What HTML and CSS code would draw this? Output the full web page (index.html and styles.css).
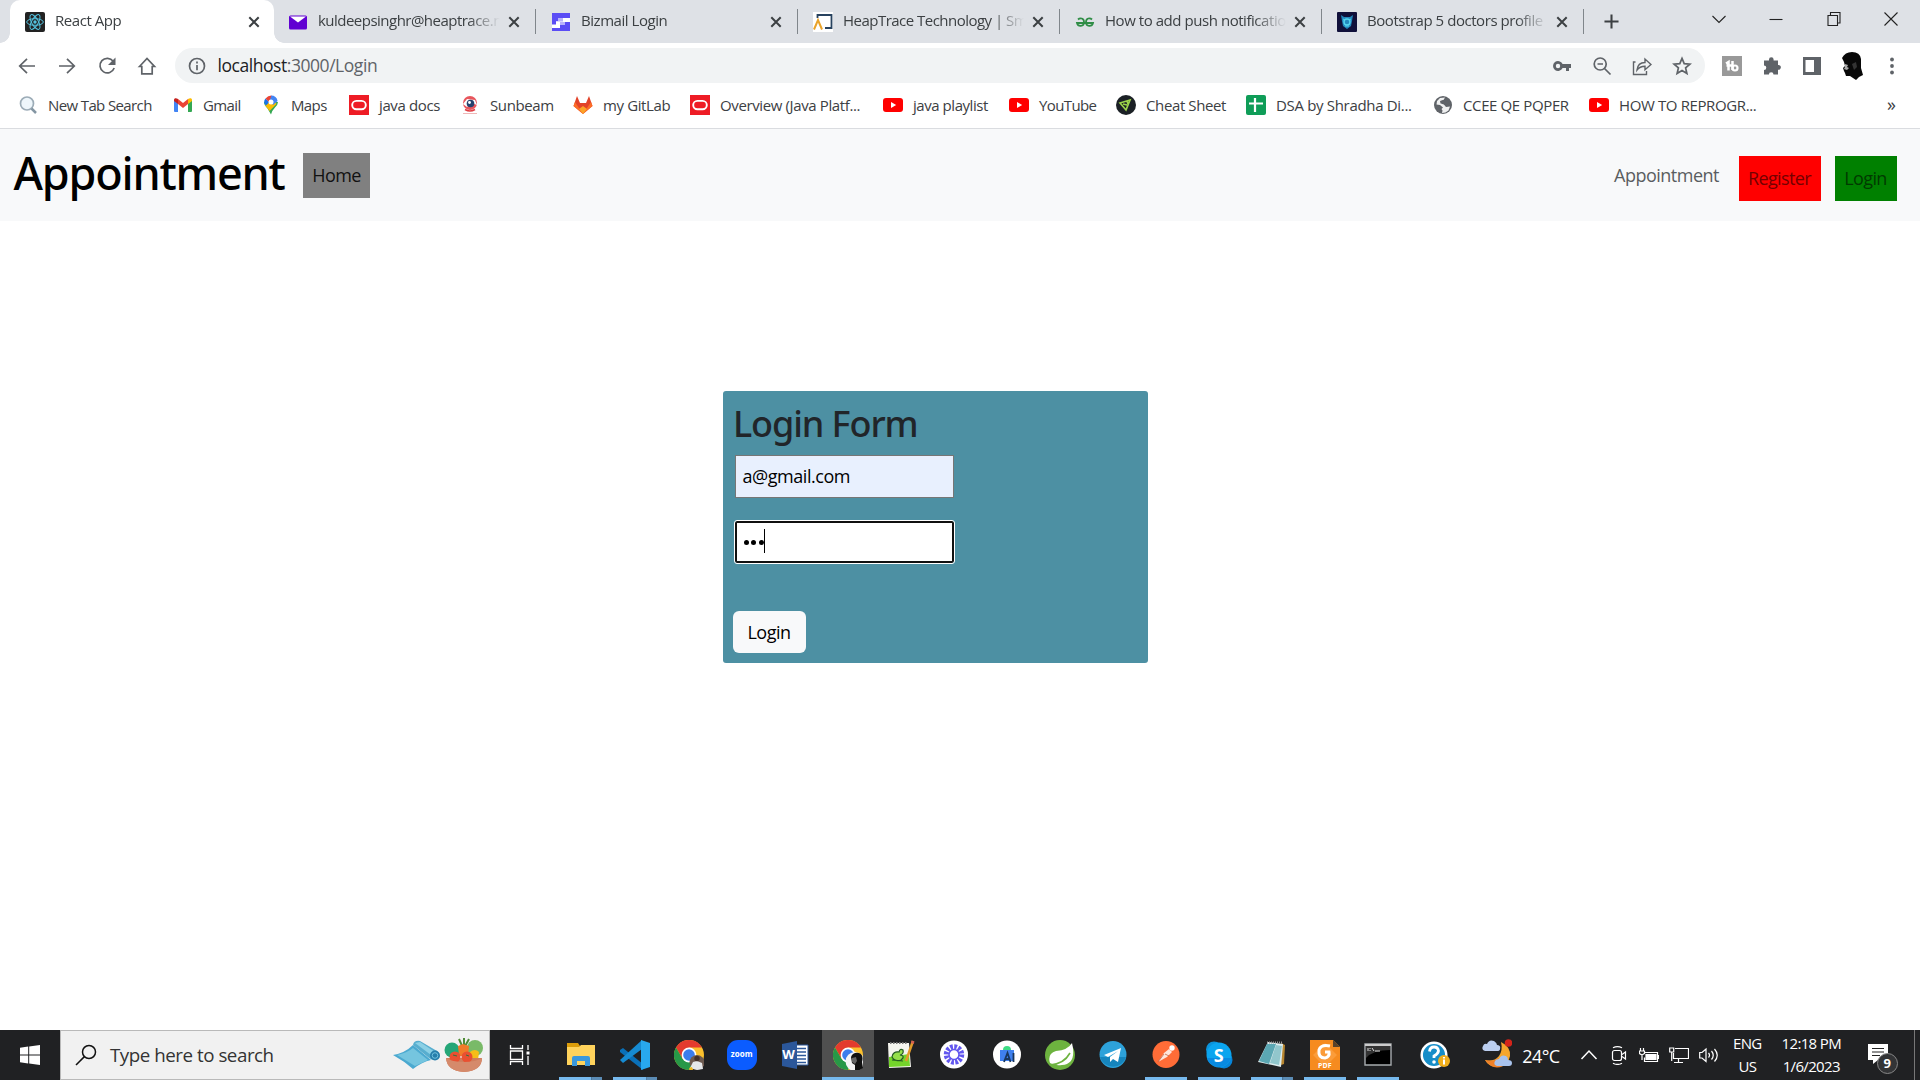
FILE: index.html
```html
<!DOCTYPE html>
<html lang="en">
<head>
<meta charset="utf-8">
<title>React App</title>
<link rel="stylesheet" href="styles.css">
</head>
<body>
<svg class="defs" aria-hidden="true">
  <symbol id="close" viewBox="0 0 12 12"><path d="M1.3 1.3 10.7 10.7M10.7 1.3 1.3 10.7" fill="none" stroke="#3c4043" stroke-width="2"/></symbol>
  <symbol id="oracle" viewBox="0 0 20 20"><path fill="#ee1c25" d="M0 0h20v20H0z"/><rect x="3.2" y="5.9" width="13.6" height="8.4" rx="4.2" fill="none" stroke="#fff" stroke-width="1.9"/></symbol>
  <symbol id="youtube" viewBox="0 0 20 20"><rect y="3" width="20" height="14" rx="3" fill="#f00"/><path fill="#fff" d="m8 7 5.2 3L8 13z"/></symbol>
  <symbol id="chrome" viewBox="0 0 30 30"><circle cx="15" cy="15" r="15" fill="#fbc02d"/><path fill="#e33b2e" d="M2 7.5A15 15 0 0 1 28 7.5H15L8.5 18.7z"/><path fill="#279847" d="M2 7.5A15 15 0 0 0 15 30l6.5-11.2L15 22 8.5 18.7z"/><circle cx="15" cy="15" r="7.4" fill="#fff"/><circle cx="15" cy="15" r="5.8" fill="#3b7ded"/></symbol>
</svg>

<header class="tabstrip">
  <div class="tab tab-active">
    <svg class="favicon" viewBox="0 0 20 20"><rect width="20" height="20" rx="2" fill="#222"/><g fill="none" stroke="#53c1de" stroke-width="1"><ellipse cx="10" cy="10" rx="8.3" ry="3.3"/><ellipse cx="10" cy="10" rx="8.3" ry="3.3" transform="rotate(60 10 10)"/><ellipse cx="10" cy="10" rx="8.3" ry="3.3" transform="rotate(120 10 10)"/></g><circle cx="10" cy="10" r="1.7" fill="#53c1de"/></svg>
    <span class="tab-title">React App</span><svg class="close"><use href="#close"/></svg>
  </div>
  <div class="tab">
    <svg class="favicon" viewBox="0 0 20 20"><rect x="1" y="3.5" width="18" height="14" rx="1.5" fill="#6001d2"/><path fill="#fff" d="M2 4.5h16l-8 6z"/></svg>
    <span class="tab-title">kuldeepsinghr@heaptrace.n</span><svg class="close"><use href="#close"/></svg>
  </div>
  <div class="tab">
    <svg class="favicon" viewBox="0 0 20 20"><path fill="#5b4df5" d="M1 1h18v18H1z"/><path fill="#fff" d="M7 6h12v4h-5v3H9v3H1v-3.5h4V9h2z"/><path fill="#b9b3fb" d="M7 6h5v3.5H5V9h2zM9 13h5v-3h-5z"/></svg>
    <span class="tab-title">Bizmail Login</span><svg class="close"><use href="#close"/></svg>
  </div>
  <div class="tab">
    <svg class="favicon" viewBox="0 0 20 20"><path fill="#fff" d="M0 0h20v20H0z"/><path fill="none" stroke="#27425f" stroke-width="1.8" d="M4.5 6V3h14v13H12"/><path fill="none" stroke="#e9a32b" stroke-width="2" d="M1 17.500 5 8l4 9.500"/></svg>
    <span class="tab-title">HeapTrace Technology | Sm</span><svg class="close"><use href="#close"/></svg>
  </div>
  <div class="tab">
    <svg class="favicon" viewBox="0 0 20 20"><path fill="none" stroke="#2f8d46" stroke-width="1.8" d="M3 7.500C5 5.500 9 6 9 10c0 5-6 5-7 1h16c-1 4-7 4-7-1 0-4 4-4.500 6-2.500"/></svg>
    <span class="tab-title">How to add push notificatio</span><svg class="close"><use href="#close"/></svg>
  </div>
  <div class="tab">
    <svg class="favicon" viewBox="0 0 20 20"><rect width="20" height="20" rx="1" fill="#10103a"/><path fill="#2388bd" d="m4 3 3 2h6l3-2-1 6-1 5-4 3-4-3-1-5z"/><circle cx="10" cy="10" r="3" fill="none" stroke="#54d4ee" stroke-width="1.400"/><path fill="none" stroke="#54d4ee" d="m6 7 2 1m6-1-2 1m-4 6h4"/></svg>
    <span class="tab-title">Bootstrap 5 doctors profile</span><svg class="close"><use href="#close"/></svg>
  </div>
  <svg class="new-tab" viewBox="0 0 16 16"><path d="M8 .5v15M.5 8h15" stroke="#3c4043" stroke-width="2.2"/></svg>
  <div class="window-controls">
    <svg viewBox="0 0 14 14"><path d="m.5 4 6.500 6.500L13.500 4"/></svg>
    <svg viewBox="0 0 14 14"><path d="M.5 7.500h13"/></svg>
    <svg viewBox="0 0 14 14"><path d="M1 3.500h9.500v10H1zM3.500 3.500v-3h9.500v10.500h-2.500"/></svg>
    <svg viewBox="0 0 14 14"><path d="m.5.5 13 13m0-13-13 13"/></svg>
  </div>
</header>

<nav class="toolbar">
  <svg viewBox="0 0 20 20"><path d="M18 10H3m7-7.200L2.700 10l7.300 7.200"/></svg>
  <svg viewBox="0 0 20 20"><path d="M2 10h15m-7-7.200 7.300 7.200-7.300 7.200"/></svg>
  <svg viewBox="0 0 20 20"><path d="M16.200 5.300A7.300 7.300 0 1 0 17.200 12"/><path class="solid" d="M18.500 1.500V9H11z"/></svg>
  <svg viewBox="0 0 20 20"><path d="m2.500 10.500 7.500-8 7.500 8h-2.300v7.300H4.800v-7.300z"/></svg>
  <div class="omnibox">
    <svg viewBox="0 0 20 20"><circle cx="10" cy="10" r="7.500"/><path d="M10 9v5.200M10 5.500v2"/></svg>
    <span class="url"><b>localhost</b>:3000/Login</span>
    <svg viewBox="0 0 20 20"><path class="solid" fill-rule="evenodd" d="M10.600 8A5 5 0 1 0 10.600 12H14v3h3v-3h2V8zM6 7.800a2.200 2.200 0 1 1 0 4.400 2.200 2.200 0 0 1 0-4.400z"/></svg>
    <svg viewBox="0 0 20 20"><circle cx="8.200" cy="8" r="6"/><path d="m12.500 12.500 6 6M5.500 8H11"/></svg>
    <svg viewBox="0 0 20 20"><path stroke-width="1.400" d="M3.500 6H1.500v12.500h13V15M5 14c.5-5 3-7.500 8-7.500V3l6 5.500-6 5.200v-3.500c-4 0-6 1-8 3.800z"/></svg>
    <svg viewBox="0 0 20 20"><path d="m10 2.400 2.200 5.300 5.700.5-4.300 3.700 1.300 5.600-4.900-3-4.900 3 1.300-5.600L2.100 8.200l5.700-.5z"/></svg>
  </div>
  <svg viewBox="0 0 20 20"><path fill="#999" stroke="none" d="M0 0h20v20H0z"/><path stroke="#fff" stroke-width="2.500" d="m4 7.500 2.500-1.500v8.500M4.500 9.500h6M10.500 5v9"/><circle cx="13" cy="12" r="2.500" stroke="#fff" stroke-width="2.200"/></svg>
  <svg viewBox="0 0 20 20"><path class="solid" d="M7 3.500a2.300 2.300 0 1 1 4.600 0V4.500H16V9a2.400 2.400 0 1 1 0 4.700V18.500h-4.500a2.300 2.300 0 0 0-4.600 0H2V14a2.300 2.300 0 0 0 0-4.600V4.500h5z"/></svg>
  <svg viewBox="0 0 20 20"><path class="solid" fill-rule="evenodd" d="M1 1h18v18H1zM3.500 4v12H12V4z"/></svg>
  <svg class="avatar" viewBox="0 0 22 28"><path fill="#080808" d="M1 6Q4 0 11 0q8 0 9 7v9l2 7-4 2-3 3-6-4H5l-1-3-1-2-1-3 2-2-1-4z"/><path fill="#aaa" d="m4 12 3 1-1 2 2 1-2 2-3-1 1-2z"/><path fill="#333" d="m11 12 4-2 1 5-3 3z"/></svg>
  <svg viewBox="0 0 20 20"><g class="solid"><circle cx="10" cy="3.500" r="1.900"/><circle cx="10" cy="10" r="1.900"/><circle cx="10" cy="16.500" r="1.900"/></g></svg>
</nav>

<nav class="bookmarks">
  <a class="tight"><svg viewBox="0 0 20 20"><circle cx="9" cy="8.500" r="6.500" fill="#eef6fb" stroke="#9cacb7" stroke-width="1.700"/><path d="m13.500 13.500 4.500 4.500" stroke="#8496a3" stroke-width="2.500"/></svg>New Tab Search</a>
  <a class="tight"><svg viewBox="0 0 20 20"><path fill="#4285f4" d="M1 5.500 5 8v9H2q-1 0-1-1z"/><path fill="#34a853" d="m19 5.500-4 2.500v9h3q1 0 1-1z"/><path fill="#ea4335" d="m5 4 5 4 5-4v5l-5 4-5-4z"/><path fill="#c5221f" d="M1 5c0-2 2-2.500 4-1v5L1 6z"/><path fill="#fbbc04" d="M19 5c0-2-2-2.500-4-1v5l4-3z"/></svg>Gmail</a>
  <a class="tight"><svg viewBox="0 0 20 20"><path fill="#34a853" d="M3 7q0 3 3.500 6.500L10 19.500q1-4 4-7Q17 9.500 17 7z"/><path fill="#fbbc04" d="m4 10 8-6 3.500 5-7 7z"/><path fill="#4285f4" d="M10 .5A6.800 6.800 0 0 1 16.600 6L12 10l-4-6z"/><path fill="#1a73e8" d="m4.500 3.500 4 3.500L5 10.500Q1.500 7 4.500 3.500z"/><path fill="#ea4335" d="M4.500 3.500Q7 .5 10.500.5L8 7z"/><circle cx="10" cy="7" r="2.500" fill="#fff"/></svg>Maps</a>
  <a><svg><use href="#oracle"/></svg>java docs</a>
  <a><svg viewBox="0 0 20 20"><circle cx="10" cy="8" r="7" fill="#e8565c"/><path fill="#fff" d="m3 9 4-5 8 1 2 5-5-2-5 4z"/><circle cx="10.500" cy="8.500" r="3.800" fill="#27426e"/><circle cx="9.500" cy="7.500" r="1.400" fill="#fff"/><path d="M5 14.500q5 3 10 0" fill="none" stroke="#df3f44" stroke-width="1.500"/><path d="M3 18.500h14" stroke="#f0b7b7"/></svg>Sunbeam</a>
  <a><svg viewBox="0 0 20 20"><path fill="#e24329" d="m4 1 3 7h6l3-7 3.500 10L10 19 .5 11z"/><path fill="#fc6d26" d="m.5 11 1.500-4 8 12 8-12 1.500 4L10 19z"/><path fill="#fca326" d="m6 14 4-3 4 3-4 5z"/></svg>my GitLab</a>
  <a><svg><use href="#oracle"/></svg>Overview (Java Platf...</a>
  <a class="snug"><svg><use href="#youtube"/></svg>java playlist</a>
  <a class="tight"><svg><use href="#youtube"/></svg>YouTube</a>
  <a><svg viewBox="0 0 20 20"><circle cx="10" cy="10" r="10" fill="#1b2025"/><path fill="none" stroke="#9bd34a" stroke-width="1.700" d="m4 8 10-3-4 10zM7 9l4 1m0-4 1 3"/></svg>Cheat Sheet</a>
  <a class="loose"><svg viewBox="0 0 20 20"><rect width="20" height="20" rx="2" fill="#0f9d58"/><path d="M9 3v14M3 8.500h14" stroke="#fff" stroke-width="2.200"/></svg>DSA by Shradha Di...</a>
  <a><svg viewBox="0 0 20 20"><circle cx="10" cy="10" r="9" fill="#5f6368"/><path fill="#fff" d="M12 2.500 10.500 5 7 6l.5 2.500 3 .5 2.500 3 4-.5-1.500 4-3 2-3.500.5.500-2.500-1-1.500 1.500-1.500L7 10l-3.500-.5L4 6l3-3z" opacity=".9"/><path fill="#5f6368" d="m8 6 5-2 3 3-2 3-5-1z"/></svg>CCEE QE PQPER</a>
  <a><svg><use href="#youtube"/></svg>HOW TO REPROGR...</a>
  <span class="more">»</span>
</nav>

<main class="page">
  <nav class="navbar">
    <h1>Appointment</h1>
    <a class="nav-home">Home</a>
    <a class="nav-link">Appointment</a>
    <a class="nav-box register">Register</a>
    <a class="nav-box login">Login</a>
  </nav>
  <form class="card">
    <h2>Login Form</h2>
    <div class="field email">a@gmail.com</div>
    <div class="field password"><i></i><i></i><i></i><span class="caret"></span></div>
    <button type="button">Login</button>
  </form>
</main>

<footer class="taskbar">
  <div class="start"><svg viewBox="0 0 20 20"><path fill="#fff" d="M0 2.700 8.200 1.500v8H0zM9.200 1.400 20 0v9.500H9.200zM0 10.500h8.200v8L0 17.300zM9.200 10.500H20V20l-10.800-1.400z"/></svg></div>
  <div class="search">
    <svg class="lens" viewBox="0 0 22 22"><circle cx="14" cy="8" r="6.500"/><path d="M9.400 12.600 1 21"/></svg>
    <span>Type here to search</span>
    <svg class="mat" viewBox="0 0 48 30"><path fill="#4ba9d0" d="M0 15q12-2 20-10l18 15q-9 2-18 9-9-8-20-14z"/><path fill="#75c5df" d="M4 15q10-2 16-7l15 12-13 6z"/><path fill="#58aecf" d="M20 5q1-5 7-4l17 10q4 5 0 8-5 2-8-1z"/><path fill="#8bd0e5" d="m22 3 5-1 15 10-4 3z"/><circle cx="42" cy="15.500" r="5" fill="#277eab"/><circle cx="42" cy="15.500" r="2.800" fill="none" stroke="#6fc1de"/></svg>
    <svg class="bowl" viewBox="0 0 40 34"><circle cx="8" cy="12" r="7.500" fill="#24a677"/><circle cx="31" cy="10" r="8" fill="#79ba68"/><path d="m15 1 4 9m6-9-5 9M20 0v10" stroke="#4f8c38" stroke-width="2"/><path fill="#f17b29" d="m14 8 5-2 6 2-1 10h-9z"/><path fill="#f6bd18" d="M26 14q5-4 9 0l-1 8h-8z"/><path fill="#cf7d5c" d="M2 20h36q0 13-18 14Q3 33 2 20z"/><circle cx="11" cy="19" r="5.500" fill="#e95031"/><circle cx="23" cy="19" r="5.500" fill="#e95031"/><path fill="#d58a6b" d="M2 20q6 4 18 4t18-4q-1 13-18 14Q3 33 2 20z"/><path d="m9 17 4 1m9-1 3 1" stroke="#327340"/></svg>
  </div>
  <div class="task-view"><svg viewBox="0 0 22 20"><g fill="none" stroke="#fff" stroke-width="1.300"><path d="M1.500 0v3.500h12V0M1.500 6h12v8.500h-12zM1.500 20v-3.300h12V20M19 0v5m0 6v9"/></g><path fill="#fff" d="M17.500 6.500h3v3h-3z"/></svg></div>
  <div class="apps">
    <div class="app open multi"><svg viewBox="0 0 30 30"><path fill="#dc9d0a" d="M1 3h11l2 3v5H1z"/><path fill="#ffd35c" d="M1 7h12l2-2h14v20H1z"/><path fill="#3a98dd" d="M6 26V18q0-2 2-2h14q2 0 2 2v8h-5v-5h-8v5z"/></svg></div>
    <div class="app open multi"><svg viewBox="0 0 30 30"><path fill="#0a70b8" d="m0 10 3-2 20 16v6L0 12z"/><path fill="#168bd2" d="M0 20 22 0v9L3 23z"/><path fill="#28a8ed" d="m21 0 9 3v24l-9 3z"/></svg></div>
    <div class="app"><svg viewBox="0 0 30 30"><use href="#chrome"/><circle cx="23" cy="22.500" r="7.500" fill="#6d5a50"/><path fill="#e5e7ea" d="m16 28 3-6 4-1 5 2 1 6-6 1z"/><circle cx="23" cy="18.500" r="2.700" fill="#433029"/><path fill="#f0b71f" d="m15 28 3-1 1 3h-3z"/></svg></div>
    <div class="app"><svg viewBox="0 0 30 30"><rect width="30" height="30" rx="11" fill="#0b5cff"/></svg><b class="zoom-word">zoom</b></div>
    <div class="app"><svg viewBox="0 0 30 30"><path fill="#fff" d="M15 5h13v20H15z" stroke="#2b579a"/><path d="M17 8.500h9m-9 3.500h9m-9 3.500h9m-9 3.500h9m-9 3.500h9" stroke="#2b579a" stroke-width="1.400"/><path fill="#2b579a" d="m2 4 15-3v28L2 26z"/></svg><b class="word-w">W</b></div>
    <div class="app open current"><svg viewBox="0 0 30 30"><use href="#chrome"/><circle cx="22" cy="21.500" r="9.500" fill="#f4f4f4"/><path fill="#111" d="M18 17q2-5 8-4 5 2 3 9l1 6-5 3-3-1v-5l-3-2z"/><path fill="#666" d="m19 18 4-1 1 4-2 3-3-2z"/></svg></div>
    <div class="app"><svg viewBox="0 0 30 30"><path fill="#f5f5ef" d="M2 3h21l2 24-22 1z"/><path fill="#74d42b" d="m3 17 20-3 1 12-21 1z"/><path d="M4 3h17" stroke="#777" stroke-width="2" stroke-dasharray="1.500 1.500"/><path fill="#95df4b" stroke="#245a24" stroke-width="1.200" d="M6 17q1-6 7-5 1-4 4-2 1 4-3 5 6 1 1 5-6 2-9-3zm0 3 11 1"/><path d="m27 1-7 20" stroke="#e19b29" stroke-width="2.500"/><path d="m27 1-.700 2.500" stroke="#d55e53" stroke-width="3"/></svg></div>
    <div class="app"><svg viewBox="0 0 30 30"><circle cx="15" cy="14.500" r="14" fill="#fff"/><circle cx="15" cy="14.500" r="7.500" fill="none" stroke="#6257ef" stroke-width="5.500" stroke-dasharray="2.600 1.327"/><circle cx="15" cy="14.500" r="5" fill="none" stroke="#6257ef" stroke-width="1.500"/></svg></div>
    <div class="app"><svg viewBox="0 0 30 30"><circle cx="15" cy="14.500" r="14" fill="#fff"/><path fill="#3f80ee" d="M8 10h14v11H8z"/><path fill="#3ddc84" d="M11 10q0-4 4-4t4 4z"/><path fill="none" stroke="#18365c" stroke-width="1.800" d="m12 22 3.500-9 3 9m-5-3h4m4-6v9"/></svg></div>
    <div class="app"><svg viewBox="0 0 30 30"><circle cx="15" cy="15" r="15" fill="#6db33f"/><path fill="#fff" d="M27 3q5 21-10 22-7 1-12-2Q2 14 11 11q12-1 16-8z"/><path d="M5 25q14-1 20-12" fill="none" stroke="#6db33f" stroke-width="1.600"/></svg></div>
    <div class="app"><svg viewBox="0 0 30 30"><circle cx="15" cy="14.500" r="13.500" fill="#2da2da"/><path fill="#1685bd" d="M2 17a13.500 13.500 0 0 0 26 0z"/><path fill="#fff" d="m6 15 17-7-3 14-5-3-3 3v-5l8-6-10 6z"/></svg></div>
    <div class="app open"><svg viewBox="0 0 30 30"><circle cx="15" cy="14.500" r="13.500" fill="#ff6c37"/><circle cx="21" cy="8" r="2.700" fill="#fff"/><path fill="#ffe5dc" d="m18 9 3 3-5 5-9 5 6-9z"/><path d="M13 14 7 22m7-8 4 2" stroke="#b65434" stroke-width=".7"/></svg></div>
    <div class="app open"><svg viewBox="0 0 30 30"><circle cx="10" cy="9.500" r="8" fill="#0b94dc"/><circle cx="20" cy="20" r="8.500" fill="#0785d9"/><circle cx="15" cy="15" r="12.500" fill="#0ba5ef"/><path fill="#087fdc" d="M3 18a12.500 12.500 0 0 0 24 0z" opacity=".7"/></svg><b class="skype-s">S</b></div>
    <div class="app open multi"><svg viewBox="0 0 30 30"><path fill="#b8862f" d="m24 3 4 2-1 19-3 1z"/><path fill="#ddecee" d="m11 2 15 2-2 23L1 22z"/><path fill="#5ba7b3" d="M10 4h9l-7 20-10-3z"/><path fill="#91c6cc" d="m19 5 6 1-3 19-9-2z"/><path d="M10 2.500h16" stroke="#999" stroke-width="2" stroke-dasharray="1 1"/></svg></div>
    <div class="app open"><svg viewBox="0 0 30 30"><path fill="#f68b1f" d="M0 0h23l7 7v23H0z"/><path fill="#59412a" d="M23 0v7h7z"/><path fill="#ffad55" d="m15 3 12 12-12 12L3 15z" opacity=".5"/><path fill="none" stroke="#fff" stroke-width="3" d="M20 6q-9-2-11 4-1 8 6 8 5-1 4-6h-4"/></svg><b class="pdf-label">PDF</b></div>
    <div class="app open"><svg viewBox="0 0 30 30"><path fill="#000" stroke="#a7acaf" stroke-width="1.400" d="M2 4h26v21H2z"/><path fill="#333" d="M3 6h24v4Q10 10 3 18z"/><path stroke="#ccc" d="M2 5h26" stroke-width="2"/><path stroke="#ddd" d="M5 8v3m2-3v1m0 1v1m2-3 2 3m1 0h5"/></svg></div>
  </div>
  <svg class="help" viewBox="0 0 30 30"><circle cx="14" cy="15" r="12.300" fill="#168dc8" stroke="#fff" stroke-width="2.500"/><path d="M9.500 11.500Q10 7 14 7t4.500 4Q18 14 14 16v2" fill="none" stroke="#fff" stroke-width="2.800"/><circle cx="14" cy="22" r="1.800" fill="#fff"/><circle cx="24" cy="21" r="6" fill="#f0ae1c"/><path d="M24 19.500v5m0-7.500v1.500" stroke="#fff" stroke-width="2"/></svg>
  <svg class="weather" viewBox="0 0 30 30"><path fill="#f6a62c" d="M19 3q10 5 9 14-2 12-14 11-8-1-11-7 9 2 14-4 4-6 2-14z"/><path fill="#ef812a" d="M3 21q9 2 13-2l5 8q-10 5-18-6z"/><path fill="#bccff0" d="M3 12Q-1 11 1 7q1-3 4-2 2-5 7-3 3 2 3 4 4 0 3 4 0 2-3 2z"/><path fill="#a8c2ec" d="M15 27q-4-1-2-5 1-2 4-2 2-5 7-3 2 1 2 4 4 0 4 3 0 3-3 3z"/><circle cx="26.500" cy="4" r="3.800" fill="#d3241a"/></svg>
  <span class="temp">24°C</span>
  <div class="tray">
    <svg viewBox="0 0 20 20"><path stroke-width="1.500" d="m2.500 14 7.500-8 7.500 8"/></svg>
    <svg viewBox="0 0 20 20"><rect x="3.500" y="5.500" width="9" height="10" rx="2"/><path d="m13 9.500 3.500-2.500v7L13 11.500M4 2.800q4.500-2.500 9 0M4 18.200q4.500 2.500 9 0"/></svg>
    <svg viewBox="0 0 20 20"><path d="M5.500 7.500h13v9h-13v-4M19.500 10v4M1.500 3v3m3-3v3M.5 6h5v2.500L3 10 .5 8.500zM3 10v5"/><path fill="#fff" d="M7 9.500h10v5H7z"/></svg>
    <svg viewBox="0 0 20 20"><path d="M6 3.500h13.500v10H4.500V8M5 17.500h9m-4.500-4v4M.700 3h4v4h-4zM2.700 7v9"/></svg>
    <svg viewBox="0 0 20 20"><path d="M.700 7.500H3L7 4v12.500l-4-3.500H.700zM9.500 8q2 2.200 0 4.500M12.500 6q3.500 4.200 0 8.500M15.500 4q5.500 6.200 0 12.500"/></svg>
  </div>
  <div class="stack lang"><span>ENG</span><span>US</span></div>
  <div class="stack clock"><span>12:18 PM</span><span>1/6/2023</span></div>
  <div class="notify"><svg viewBox="0 0 20 20"><path fill="#fff" d="M0 0h20v16H10l-5 4v-4H0z"/><path d="M4 4.500h12M4 8h12M4 11.500h8" stroke="#222" stroke-width="1.200"/></svg><b>9</b></div>
  <div class="show-desktop"></div>
</footer>
</body>
</html>
```
FILE: styles.css
```css
* { box-sizing: border-box; }
body { margin: 0; height: 1080px; overflow: hidden; display: flex; flex-direction: column; background: #fff; color: #212529; font-family: "Open Sans", "Noto Sans", sans-serif; }
svg { display: block; flex: none; }
.defs { position: absolute; width: 0; height: 0; }
h1, h2 { margin: 0; font-family: "Noto Sans", sans-serif; font-weight: 500; line-height: 1.2; }

/* tab strip */
.tabstrip { height: 43px; flex: none; display: flex; align-items: flex-start; padding-left: 10px; background: #dee1e6; }
.tab { width: 262px; height: 43px; flex: none; display: flex; align-items: center; padding: 0 14px 0 15px; font-size: 15px; letter-spacing: -.45px; color: #3c4043; background: linear-gradient(#80868b, #80868b) right 0 top 9px / 1.5px 25px no-repeat; }
.tab-active { width: 264px; padding: 0 12px 0 15px; background: #fff; border-radius: 10px 10px 0 0; position: relative; }
.tab-active::before, .tab-active::after { content: ""; position: absolute; bottom: 0; width: 10px; height: 10px; }
.tab-active::before { left: -10px; background: radial-gradient(circle at 0 0, transparent 9.5px, #fff 10px); }
.tab-active::after { right: -10px; background: radial-gradient(circle at 100% 0, transparent 9.5px, #fff 10px); }
.tab:nth-child(2) { padding-left: 14px; }
.favicon { width: 20px; height: 20px; margin-right: 10px; }
.tab-title { flex: 1; min-width: 0; overflow: hidden; white-space: nowrap; line-height: 22px; margin-right: 8px; padding-bottom: 3px; -webkit-mask-image: linear-gradient(90deg, #000 calc(100% - 32px), transparent); mask-image: linear-gradient(90deg, #000 calc(100% - 32px), transparent); }
.tab:nth-child(2) .tab-title, .tab:nth-child(4) .tab-title { letter-spacing: -.52px; }
.close { width: 12px; height: 12px; margin-right: 2px; }
.new-tab { width: 15px; height: 15px; margin: 14px 0 0 19.500px; }
.window-controls { margin-left: auto; display: flex; gap: 43.300px; padding: 12px 22px 0 0; }
.window-controls svg { width: 14px; height: 14px; fill: none; stroke: #222; stroke-width: 1.100; }

/* toolbar */
.toolbar { height: 45px; flex: none; display: flex; align-items: center; gap: 20px; padding: 0 17.500px 0 17px; }
.toolbar svg { width: 20px; height: 20px; fill: none; stroke: #5f6368; stroke-width: 1.700; }
.toolbar svg .solid { fill: #5f6368; stroke: none; }
.toolbar .avatar { width: 22px; height: 28px; stroke: none; margin: 0 -1px; }
.omnibox { width: 1530px; height: 35px; margin: 0 -3px 0 -2px; border-radius: 18px; background: #f1f3f4; display: flex; align-items: center; gap: 20px; padding: 0 13px 0 12px; }
.url { flex: 1; margin-left: -9.500px; font-size: 17.500px; letter-spacing: -.45px; line-height: 24px; padding-bottom: 1px; color: #5f6368; }
.url b { font-weight: 400; color: #202124; }

/* bookmarks */
.bookmarks { height: 41px; flex: none; display: grid; grid-template-columns: 155px 88px 88px 111px 113px 117px 193px 126px 107px 130px 187px 156px 294px auto; align-items: center; padding: 0 0 6px 18px; border-bottom: 1px solid #dadce0; font-size: 15px; letter-spacing: -.38px; color: #3c4043; white-space: nowrap; }
.bookmarks a { display: flex; align-items: center; gap: 10px; line-height: 20px; }
.bookmarks svg { width: 20px; height: 20px; }
.bookmarks .tight { letter-spacing: -.62px; }
.bookmarks .snug { letter-spacing: -.45px; }
.bookmarks .loose { letter-spacing: -.32px; }
.more { margin-left: 4px; font-size: 18px; line-height: 20px; padding-bottom: 2px; }

/* page */
.page { flex: 1; min-height: 0; }
.navbar { height: 92px; display: flex; align-items: center; padding: 0 23px 0 13.500px; background: #f8f9fa; font-size: 18px; }
.navbar h1 { width: 289.500px; font-size: 45px; letter-spacing: -1.200px; color: #000; padding-bottom: 5px; }
.nav-home { height: 45px; width: 67px; display: grid; place-items: center; background: #808080; color: #111; letter-spacing: -.6px; }
.nav-link { margin-left: auto; margin-right: 20px; color: #5a5d60; letter-spacing: -.5px; }
.nav-box { height: 45px; margin-top: 6px; display: grid; place-items: center; letter-spacing: -.6px; padding-right: 1px; }
.register { width: 82px; margin-right: 14px; background: #f00; color: #730000; }
.login { width: 62px; background: #008000; color: #003a00; }
.card { width: 425px; height: 272px; margin: 170px 0 0 723px; padding: 10px; border-radius: 3px; background: #4d90a3; }
.card h2 { height: 54px; padding: 1px 0 0; font-size: 36px; letter-spacing: -1.100px; }
.field { width: 219px; height: 43px; margin-left: 2px; padding-left: 7px; display: flex; align-items: center; font-size: 18px; letter-spacing: -.45px; color: #000; }
.email { border: 1px solid #767676; background: #e8f0fe; padding: 0 0 1px 6.500px; }
.password { width: 219px; height: 42px; margin: 23px 0 0 2px; border: 2px solid #101010; border-radius: 2px; background: #fff; outline: 1px solid #fff; }
.password i { width: 5px; height: 5px; margin-right: 2.300px; border-radius: 50%; background: #000; }
.caret { width: 1px; height: 24px; margin: -2px 0 0 -1.500px; background: #000; }
.card button { display: block; width: 73px; height: 42px; margin-top: 48px; padding: 0 7px 0 6px; border: 0; border-radius: 6px; background: #f8f9fa; color: #000; font: 18px "Open Sans", sans-serif; letter-spacing: -.5px; }

/* taskbar */
.taskbar { height: 50px; flex: none; display: flex; align-items: center; background: #202123; color: #fff; }
.start { width: 60px; }
.start svg { width: 20px; height: 20px; margin-left: 20px; }
.search { width: 430px; height: 50px; display: flex; align-items: center; padding: 0 5px 0 14px; border: 1px solid #b9b9b9; background: #f1f1f1; color: #333; font-size: 18.750px; letter-spacing: -.47px; }
.search span { flex: 1; padding-bottom: 1px; }
.lens { width: 22px; height: 22px; margin-right: 13px; fill: none; stroke: #111; stroke-width: 1.500; }
.mat { width: 48px; height: 30px; margin-right: 3px; }
.bowl { width: 40px; height: 34px; }
.task-view { width: 63.500px; }
.task-view svg { width: 22px; height: 20px; margin-left: 19px; }
.apps { height: 50px; display: flex; margin-right: 16px; }
.app { position: relative; width: 53px; display: grid; place-items: center; }
.app:nth-child(-n+2) { width: 54.400px; }
.app svg { width: 30px; height: 30px; }
.app b { position: absolute; color: #fff; line-height: 1; }
.app::after { content: ""; position: absolute; left: 5.500px; right: 5.500px; bottom: 0; height: 3px; }
.open::after { background: #76b9ed; }
.multi::after { background: linear-gradient(90deg, #76b9ed 75%, #4a7397 75%, #5b8cb5 78%); }
.current { background: linear-gradient(#505050, #505050) center / 52px 100% no-repeat; }
.current::after { left: .5px; right: .5px; }
.zoom-word { font-size: 8px; letter-spacing: .1px; top: 20px; }
.word-w { font-size: 13px; left: 14px; top: 18px; }
.skype-s { font-size: 18px; top: 16px; }
.pdf-label { font-size: 7px; top: 32px; }
.help { width: 30px; height: 30px; margin-right: 32px; }
.weather { width: 30px; height: 30px; margin: -2px 10px 0 0; }
.temp { width: 57px; font-size: 18px; letter-spacing: -.6px; margin-top: 2px; }
.tray { width: 154px; display: flex; gap: 10px; }
.tray svg { width: 20px; height: 20px; fill: none; stroke: #fff; stroke-width: 1.200; }
.stack { display: flex; flex-direction: column; align-items: center; font-size: 15px; line-height: 22.500px; white-space: nowrap; padding-bottom: 1px; }
.lang { width: 28px; letter-spacing: -.7px; }
.clock { width: 60px; margin-left: 20px; letter-spacing: -.65px; }
.notify { width: 20px; margin: -2px 0 0 27px; position: relative; }
.notify svg { width: 20px; height: 20px; }
.notify b { position: absolute; left: 8.500px; top: 9px; width: 21px; height: 21px; display: grid; place-items: center; border: 1px solid #888; border-radius: 50%; background: #333436; font-size: 13px; line-height: 1; }
.show-desktop { height: 50px; width: 6px; margin-left: auto; border-left: 1px solid #777; }
```
